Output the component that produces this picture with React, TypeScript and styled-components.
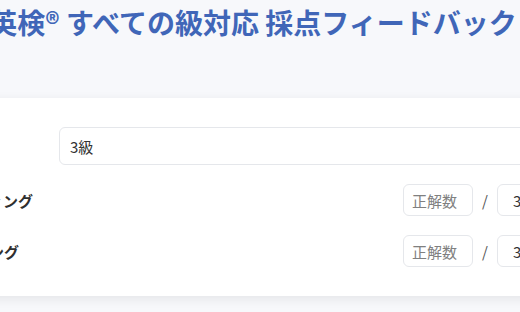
import styled, { createGlobalStyle } from "styled-components";

const GlobalStyle = createGlobalStyle`
    html, body {
        margin: 0;
        padding: 0;
        background: #f7f8fb;
        overflow: hidden;
    }
    body {
        font-family: "Noto Sans CJK JP", "Noto Sans", sans-serif;
        color: #333;
    }
`;

export default function App() {
    return (
        <>
            <GlobalStyle />
            <Page>
                <Title>英検® すべての級対応 採点フィードバック</Title>

                <Card>
                    <GradeRow>
                        <Label>受験級</Label>
                        <Select defaultValue="3">
                            <option value="3">3級</option>
                            <option value="p2">準2級</option>
                            <option value="2">2級</option>
                        </Select>
                    </GradeRow>

                    <ScoreRow>
                        <Label>リーディング</Label>
                        <Controls>
                            <ScoreInput placeholder="正解数" />
                            <Slash>/</Slash>
                            <ScoreInput $total defaultValue="30" />
                        </Controls>
                    </ScoreRow>

                    <ScoreRow>
                        <Label>リスニング</Label>
                        <Controls>
                            <ScoreInput placeholder="正解数" />
                            <Slash>/</Slash>
                            <ScoreInput $total defaultValue="30" />
                        </Controls>
                    </ScoreRow>
                </Card>
            </Page>
        </>
    )
};

const Page = styled.div`
    display: flex;
    flex-direction: column;
    align-items: center;
    width: 100%;
    min-height: 312px;
`;

const Title = styled.h1`
    margin: 4px 0 0 -14px;
    font-size: 28px;
    font-weight: 700;
    line-height: 36px;
    color: #4066b8;
    white-space: nowrap;
`;

const Card = styled.div`
    flex-shrink: 0;
    display: flex;
    flex-direction: column;
    gap: 19px;
    width: 700px;
    box-sizing: border-box;
    margin-top: 58px;
    padding: 29px 43px 29px 34px;
    background: #fff;
    border-radius: 8px;
    box-shadow: 0 3px 12px rgba(0, 0, 0, 0.08);
`;

const GradeRow = styled.div`
    display: grid;
    grid-template-columns: 106px 1fr;
    gap: 9px;
    align-items: center;
`;

const ScoreRow = styled.div`
    display: flex;
    justify-content: space-between;
    align-items: center;
    height: 32px;
`;

const Label = styled.span`
    font-size: 15px;
    font-weight: 700;
    color: #2f2f2f;
    white-space: nowrap;
`;

const Select = styled.select`
    height: 38px;
    padding: 0 6px;
    border: 1px solid #e5e7eb;
    border-radius: 6px;
    background: #fff;
    font-family: inherit;
    font-size: 15px;
    color: #333;
    outline: none;
`;

const Controls = styled.div`
    display: flex;
    align-items: center;
    gap: 9px;
`;

const ScoreInput = styled.input<{ $total?: boolean }>`
    width: 70px;
    height: 32px;
    box-sizing: border-box;
    padding: 0 8px 0 ${(p) => (p.$total ? "15px" : "8px")};
    border: 1px solid #e5e7eb;
    border-radius: 6px;
    background: #fff;
    font-family: inherit;
    font-size: 15px;
    color: #333;
    outline: none;

    &::placeholder {
        color: #808080;
    }
`;

const Slash = styled.span`
    font-size: 15px;
    color: #555;
`;
